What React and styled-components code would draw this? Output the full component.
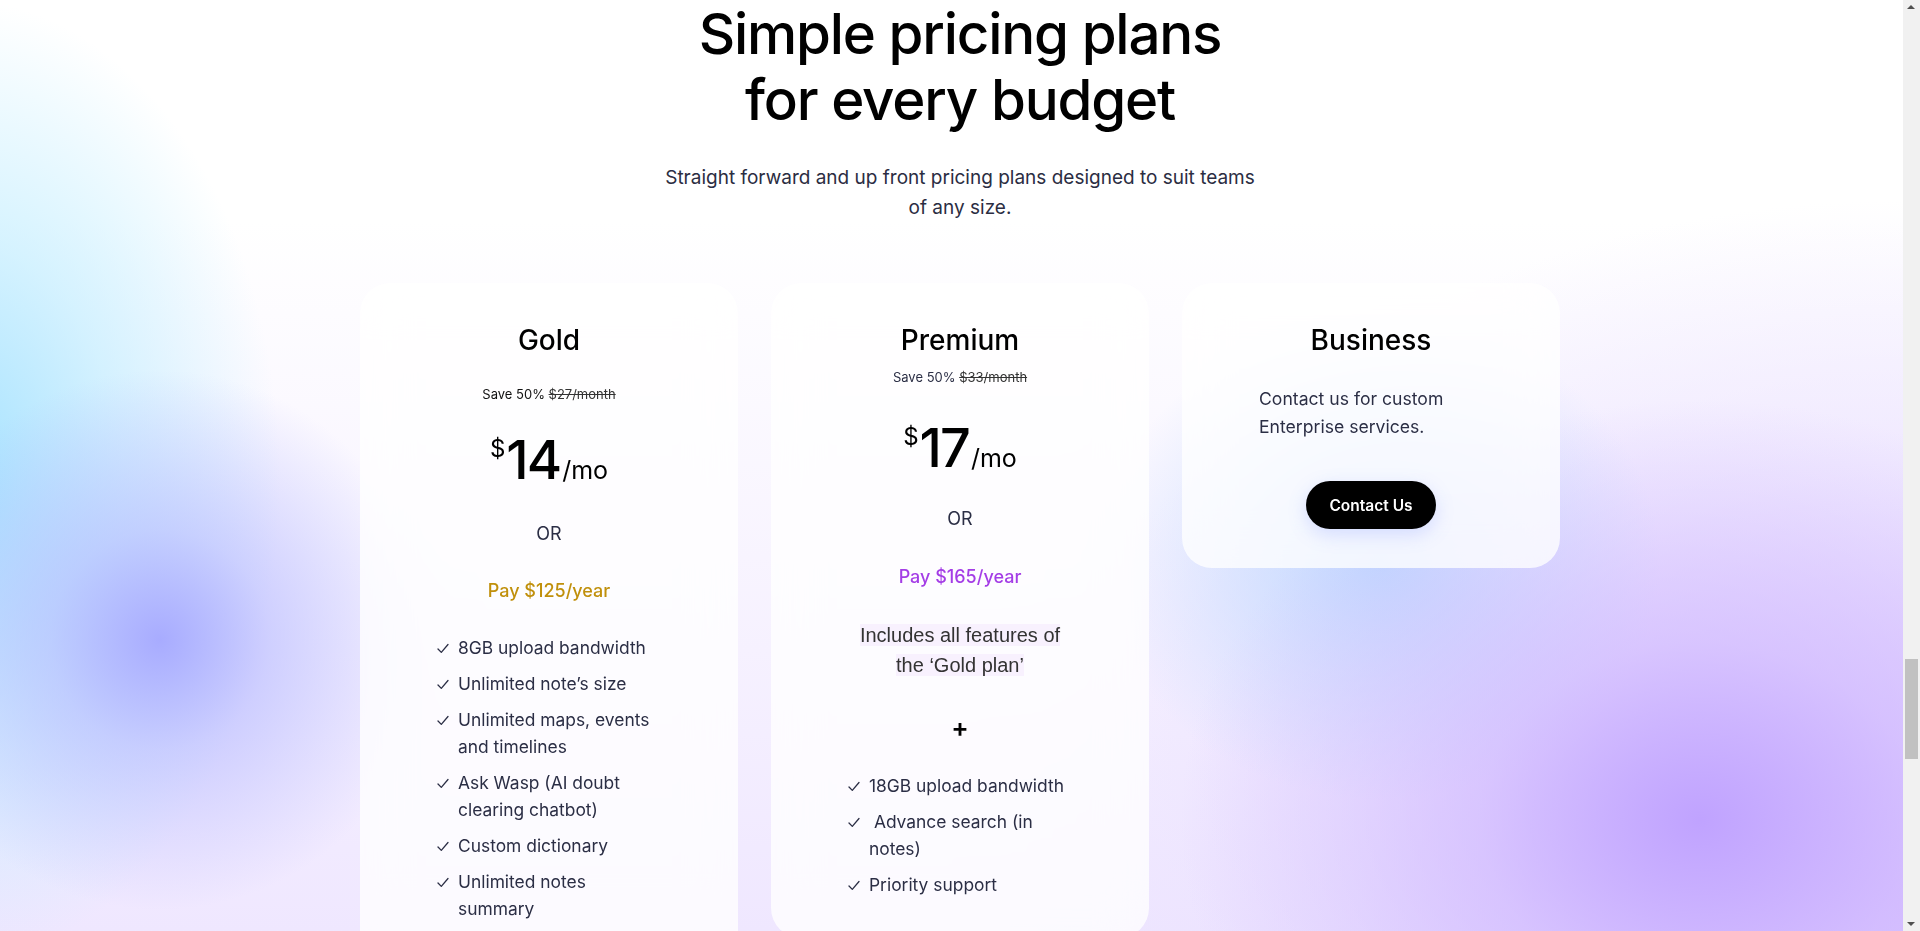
import React from 'react';
import styled, { createGlobalStyle } from 'styled-components';

// CSS
const GlobalStyle = createGlobalStyle`
html, body {
  margin: 0;
  height: 100%;
  overflow: hidden;
}
body {
  font-family: Inter, "Noto Sans", sans-serif;
  color: #2b2e45;
}
`

const Page = styled.div`
min-height: 931px;
display: flex;
flex-direction: column;
align-items: center;
padding-top: 1px;
box-sizing: border-box;
background:
  radial-gradient(circle at 160px 640px, rgba(165, 168, 255, 0.95) 0, rgba(175, 180, 255, 0.55) 110px, rgba(190, 205, 255, 0) 270px),
  radial-gradient(ellipse 320px 480px at -40px 480px, rgba(160, 225, 255, 0.95) 0, rgba(185, 235, 255, 0.6) 160px, rgba(220, 245, 255, 0) 100%),
  radial-gradient(ellipse 520px 420px at 1700px 820px, rgba(190, 160, 255, 0.95) 0, rgba(205, 180, 255, 0.6) 220px, rgba(230, 215, 255, 0) 100%),
  radial-gradient(ellipse 280px 240px at 1380px 560px, rgba(190, 215, 255, 0.95) 0, rgba(200, 220, 255, 0) 100%),
  radial-gradient(ellipse 900px 700px at 1900px 900px, rgba(218, 198, 255, 0.95) 0, rgba(232, 222, 255, 0.6) 60%, rgba(255, 255, 255, 0) 100%),
  linear-gradient(180deg, #ffffff 0, #ffffff 220px, #f6f1ff 650px, #efe7ff 931px);
`

const Title = styled.h1`
margin: 0;
font-size: 56.5px;
line-height: 66px;
font-weight: 500;
letter-spacing: -1.2px;
color: #000;
text-align: center;
`

const Subtitle = styled.p`
margin: 30px 0 0;
width: 604px;
font-size: 19px;
line-height: 30px;
color: #2b2d42;
text-align: center;
`

const CardRow = styled.div`
display: flex;
align-items: flex-start;
gap: 33px;
margin-top: 60px;
`

const Card = styled.div`
width: 378px;
box-sizing: border-box;
padding: 39px 0 ${p => p.$bottom || 40}px;
border-radius: 30px;
background: rgba(255, 255, 255, 0.78);
backdrop-filter: blur(24px);
display: flex;
flex-direction: column;
align-items: center;
`

const PlanName = styled.h2`
margin: 0;
font-size: 28px;
line-height: 36px;
font-weight: 500;
color: #000;
`

const Save = styled.div`
margin-top: ${p => p.$gap}px;
font-size: 13px;
line-height: 18px;
color: ${p => p.$color};
s { color: #333; }
`

const Price = styled.div`
margin-top: ${p => p.$gap}px;
height: 64px;
display: flex;
align-items: baseline;
color: #000;
`

const Dollar = styled.span`
font-size: 24px;
align-self: flex-start;
margin-top: 6px;
margin-right: 1px;
`

const Amount = styled.span`
font-size: 54px;
line-height: 64px;
font-weight: 500;
letter-spacing: -2px;
`

const Per = styled.span`
font-size: 25px;
margin-left: 2px;
`

const Or = styled.div`
margin-top: ${p => p.$gap}px;
font-size: 18px;
line-height: 26px;
color: #2b2e45;
`

const Pay = styled.div`
margin-top: ${p => p.$gap}px;
font-size: 18px;
line-height: 26px;
font-weight: 500;
color: ${p => p.$color};
`

const Includes = styled.p`
margin: 30px 0 0;
width: 212px;
text-align: center;
font-family: "Liberation Sans", Arial, sans-serif;
font-size: 20px;
line-height: 30px;
color: #333;
span { background: #f8f1fe; }
`

const Plus = styled.div`
margin-top: 33px;
font-size: 26px;
line-height: 30px;
font-weight: 600;
color: #000;
`

const Features = styled.ul`
list-style: none;
margin: ${p => p.$gap}px 0 0;
padding: 0;
width: 224px;
display: flex;
flex-direction: column;
gap: 9px;
`

const Feature = styled.li`
display: flex;
gap: 9px;
font-size: 17.4px;
line-height: 27px;
color: #2b2e45;
svg { flex: none; margin-top: 9px; }
`

const Blurb = styled.p`
margin: 27px 0 0;
width: 224px;
font-size: 17.6px;
line-height: 28px;
color: #2b2e45;
`

const ContactButton = styled.button`
margin-top: 40px;
height: 48px;
padding: 0 23px;
border: none;
border-radius: 24px;
background: #000;
color: #fff;
font-family: Inter, sans-serif;
font-size: 15.5px;
font-weight: 600;
box-shadow: 0 6px 18px rgba(120, 140, 255, 0.25);
`

// fake browser scrollbar over the page edge
const Scrollbar = styled.div`
position: fixed;
top: 0;
right: 0;
width: 17px;
height: 100%;
background: #f1f1f1;
`

const Thumb = styled.div`
position: absolute;
left: 2px;
right: 2px;
top: 659px;
height: 100px;
background: #c1c1c1;
`

const Arrow = styled.div`
position: absolute;
left: 4px;
${p => p.$down ? 'bottom: 5px;' : 'top: 5px;'}
width: 0;
height: 0;
border-left: 4px solid transparent;
border-right: 4px solid transparent;
${p => p.$down ? 'border-top: 4px solid #505050;' : 'border-bottom: 4px solid #505050;'}
`

const Tick = () => (
  <svg width="12" height="11" viewBox="0 0 12 11" fill="none">
    <path d="M1 6 L4.3 9.4 L11 1.5" stroke="#2b2e45" strokeWidth="1.3" strokeLinecap="round" strokeLinejoin="round" />
  </svg>
)

const goldFeatures = [
  '8GB upload bandwidth',
  'Unlimited note\u2019s size',
  'Unlimited maps, events and timelines',
  'Ask Wasp (AI doubt clearing chatbot)',
  'Custom dictionary',
  'Unlimited notes summary',
]

const premiumFeatures = [
  '18GB upload bandwidth',
  '\u00a0Advance search (in notes)',
  'Priority support',
]

function FeatureList({ items, gap }) {
  return (
    <Features $gap={gap}>
      {items.map(f => (
        <Feature key={f}><Tick />{f}</Feature>
      ))}
    </Features>
  )
}

// Code for Component starts here
function App() {
  return (
    <Page>
      <GlobalStyle />
      <Title>Simple pricing plans<br />for every budget</Title>
      <Subtitle>Straight forward and up front pricing plans designed to suit teams of any size.</Subtitle>
      <CardRow>
        <Card>
          <PlanName>Gold</PlanName>
          <Save $gap={27} $color="#111">Save 50% <s>$27/month</s></Save>
          <Price $gap={25}><Dollar>$</Dollar><Amount>14</Amount><Per>/mo</Per></Price>
          <Or $gap={29}>OR</Or>
          <Pay $gap={31} $color="#c0900c">Pay $125/year</Pay>
          <FeatureList items={goldFeatures} gap={30} />
        </Card>
        <Card>
          <PlanName>Premium</PlanName>
          <Save $gap={10} $color="#2b2e45">Save 50% <s>$33/month</s></Save>
          <Price $gap={30}><Dollar>$</Dollar><Amount>17</Amount><Per>/mo</Per></Price>
          <Or $gap={26}>OR</Or>
          <Pay $gap={32} $color="#a43de6">Pay $165/year</Pay>
          <Includes><span>Includes all features of the &lsquo;Gold plan&rsquo;</span></Includes>
          <Plus>+</Plus>
          <FeatureList items={premiumFeatures} gap={29} />
        </Card>
        <Card $bottom={39}>
          <PlanName>Business</PlanName>
          <Blurb>Contact us for custom Enterprise services.</Blurb>
          <ContactButton>Contact Us</ContactButton>
        </Card>
      </CardRow>
      <Scrollbar>
        <Arrow />
        <Thumb />
        <Arrow $down />
      </Scrollbar>
    </Page>
  )
}

export default App;
